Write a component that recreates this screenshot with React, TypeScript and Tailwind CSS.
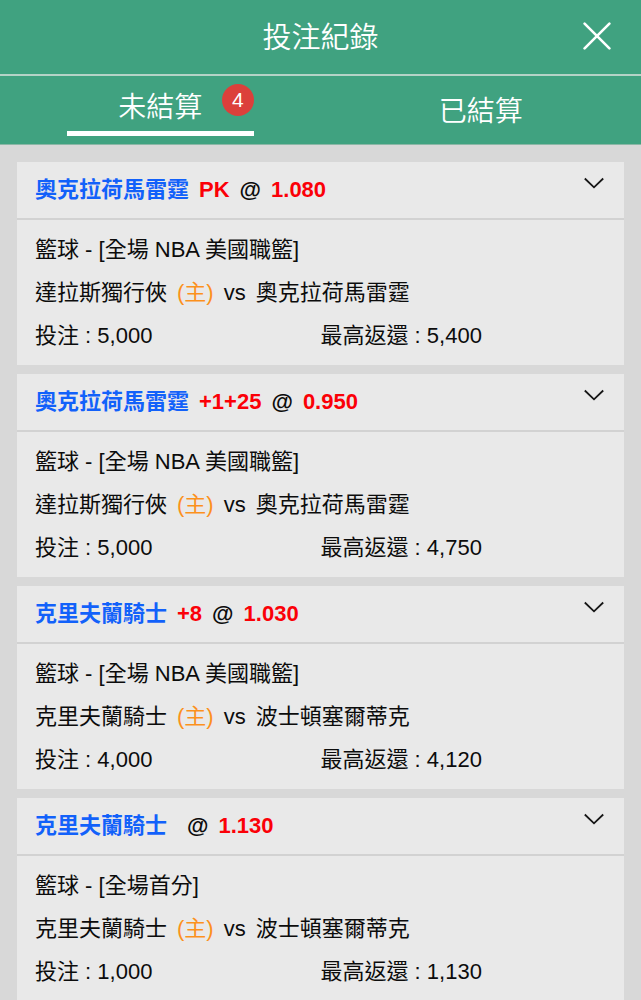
import { useState } from "react";

type Bet = {
  id: number;
  pick: string;
  handicap: string;
  odds: string;
  event: string;
  home: string;
  away: string;
  stake: string;
  maxReturn: string;
};

const bets: Bet[] = [
  { id: 1, pick: "奧克拉荷馬雷霆", handicap: "PK", odds: "1.080", event: "籃球 - [全場 NBA 美國職籃]", home: "達拉斯獨行俠", away: "奧克拉荷馬雷霆", stake: "5,000", maxReturn: "5,400" },
  { id: 2, pick: "奧克拉荷馬雷霆", handicap: "+1+25", odds: "0.950", event: "籃球 - [全場 NBA 美國職籃]", home: "達拉斯獨行俠", away: "奧克拉荷馬雷霆", stake: "5,000", maxReturn: "4,750" },
  { id: 3, pick: "克里夫蘭騎士", handicap: "+8", odds: "1.030", event: "籃球 - [全場 NBA 美國職籃]", home: "克里夫蘭騎士", away: "波士頓塞爾蒂克", stake: "4,000", maxReturn: "4,120" },
  { id: 4, pick: "克里夫蘭騎士", handicap: "", odds: "1.130", event: "籃球 - [全場首分]", home: "克里夫蘭騎士", away: "波士頓塞爾蒂克", stake: "1,000", maxReturn: "1,130" },
];

function BetCard({ bet }: { bet: Bet }) {
  const [open, setOpen] = useState(true);
  return (
    <article className="shrink-0 bg-[#e9e9e9] text-[22px] text-[#0c0c0c]">
      <header className="flex h-[58px] justify-between border-b-2 border-[#d2d2d2] px-[18px]">
        <h2 className="flex items-center gap-[10px] whitespace-nowrap pb-[2px] font-bold">
          <span className="text-[#1261fa]">{bet.pick}</span>
          <span className="text-[#fb0007]">{bet.handicap}</span>
          <span>@</span>
          <span className="text-[#fb0007]">{bet.odds}</span>
        </h2>
        <button
          type="button"
          aria-label="展開或收合"
          aria-expanded={open}
          onClick={() => setOpen(!open)}
          className="flex items-start pt-[11px] pr-[2px]"
        >
          <svg width="20" height="20" viewBox="0 0 20 20" fill="none" stroke="#161616" strokeWidth="1.8">
            <path d="M0.8 5.5 L10 14.3 L19.2 5.5" />
          </svg>
        </button>
      </header>
      {open && (
        <div className="px-[18px] py-2 leading-[43px]">
          <p>{bet.event}</p>
          <p className="flex gap-[10px] whitespace-nowrap">
            <span>{bet.home}</span>
            <span className="text-[#fc911c]">(主)</span>
            <span>vs</span>
            <span>{bet.away}</span>
          </p>
          <div className="grid grid-cols-2">
            <p>投注 : {bet.stake}</p>
            <p>最高返還 : {bet.maxReturn}</p>
          </div>
        </div>
      )}
    </article>
  );
}

export default function App() {
  return (
    <div className="flex h-screen flex-col bg-[#d8d8d8] font-['Liberation_Sans','Noto_Sans_CJK_TC',sans-serif]">
      <header className="shrink-0 bg-[#40a280] text-white">
        <div className="grid h-[76px] grid-cols-[1fr_auto_1fr] items-center border-b-2 border-[#b5d3c7]">
          <h1 className="col-start-2 pt-1 text-[29px] font-[350]">投注紀錄</h1>
          <button type="button" aria-label="關閉" className="mr-[30px] justify-self-end pb-[2px]">
            <svg width="28" height="28" viewBox="0 0 28 28" fill="none" stroke="white" strokeWidth="2.6" strokeLinecap="round">
              <path d="M1.6 1.6 L26.4 26.4 M26.4 1.6 L1.6 26.4" />
            </svg>
          </button>
        </div>
        <nav className="grid h-[69px] grid-cols-2 border-b border-[#8bb7a6] text-[28px] font-[350]">
          <button type="button" className="flex items-end justify-center pb-2">
            <span className="relative flex h-[55px] w-[187px] items-center justify-center border-b-[5px] border-white pt-1">
              未結算
              <span className="absolute top-[3px] right-0 flex size-8 items-center justify-center rounded-full bg-[#dc403b] text-[21px]">
                4
              </span>
            </span>
          </button>
          <button type="button" className="flex items-center justify-center pt-1">
            已結算
          </button>
        </nav>
      </header>
      <main className="flex min-h-0 flex-1 flex-col gap-[9px] overflow-y-auto px-[17px] pt-[17px] [scrollbar-width:none]">
        {bets.map((bet) => (
          <BetCard key={bet.id} bet={bet} />
        ))}
      </main>
    </div>
  );
}
